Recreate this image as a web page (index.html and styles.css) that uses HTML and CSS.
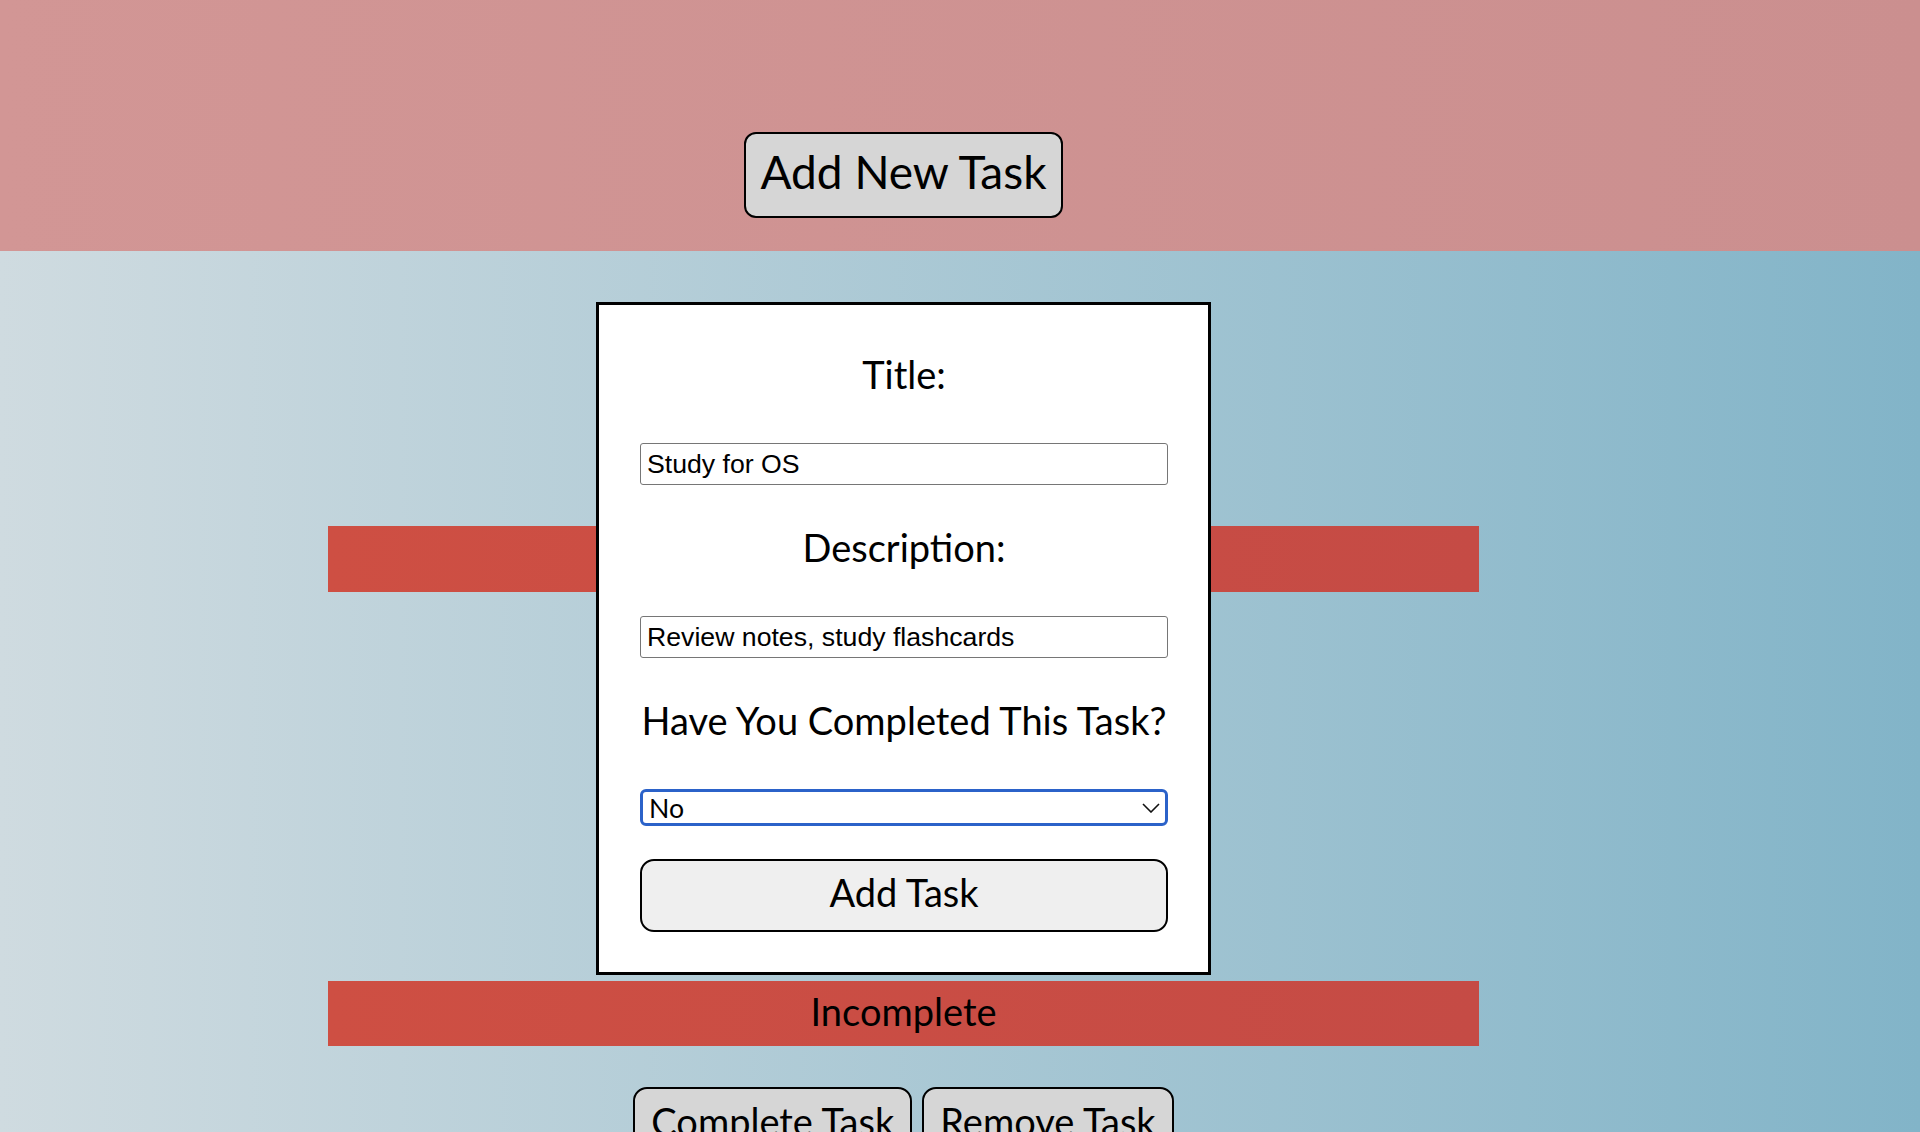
FILE: index.html
```html
<!DOCTYPE html>
<html lang="en">
<head>
  <meta charset="UTF-8">
  <title>Task Manager</title>
  <link rel="stylesheet" href="styles.css">
</head>
<body>

  <header class="top">
    <div class="wrap">
      <button class="new-btn" id="openForm">Add New Task</button>
    </div>
  </header>

  <main class="wrap list">
    <div class="task">
      <h2 class="task-title">Study for OS</h2>
      <p class="task-desc">Review notes, study flashcards</p>
      <div class="task-status">Incomplete</div>
      <div class="task-actions">
        <button class="act-btn">Complete Task</button>
        <button class="act-btn">Remove Task</button>
      </div>
    </div>

    <form class="modal" id="taskForm">
      <label for="title">Title:</label>
      <input type="text" id="title" value="Study for OS" />

      <label for="desc">Description:</label>
      <input type="text" id="desc" value="Review notes, study flashcards" />

      <label for="done">Have You Completed This Task?</label>
      <div class="select-box">
        <select id="done">
          <option value="no">No</option>
          <option value="yes">Yes</option>
        </select>
        <svg class="chevron" width="18" height="10" viewBox="0 0 18 10">
          <polyline points="1,1 9,9 17,1" fill="none" stroke="#111" stroke-width="1.6" />
        </svg>
      </div>

      <button type="submit" class="add-btn">Add Task</button>
    </form>
  </main>

  <script>
    document.getElementById("taskForm").addEventListener("submit", function(e) {
      e.preventDefault();
    });
  </script>

</body>
</html>
```

FILE: styles.css
```css
body {
  margin: 0;
  font-family: Lato, "Noto Sans", sans-serif;
  color: #000;
  min-height: 100vh;
  background: linear-gradient(to right, #cfdbe0, #82b4c8);
}
.wrap {
  width: 1807px;
}
.top {
  height: 251px;
  background: linear-gradient(to right, #d29695, #cb8f8f);
}
.top .wrap {
  display: flex;
  justify-content: center;
  padding-top: 132px;
}
.new-btn {
  height: 86px;
  padding: 0 14px 7px;
  font-family: inherit;
  font-size: 46px;
  background: #d6d6d6;
  border: 2px solid #000;
  border-radius: 12px;
  cursor: pointer;
}
.list {
  position: relative;
  padding-top: 275px;
}
.task {
  width: 1151px;
  margin: 0 auto;
  text-align: center;
}
.task-title, .task-status {
  margin: 0;
  height: 66px;
  line-height: 62px;
  font-size: 38px;
  font-weight: normal;
  background: linear-gradient(to right, #ce4f43, #c54b45);
}
.task-status {
  height: 65px;
  line-height: 60px;
}
.task-desc {
  margin: 0;
  padding: 172px 0 173px;
  font-size: 38px;
  line-height: 44px;
}
.task-actions {
  display: flex;
  justify-content: center;
  gap: 10px;
  margin-top: 41px;
}
.act-btn {
  height: 73px;
  padding: 0 16px 6px;
  font-family: inherit;
  font-size: 38px;
  background: #d6d6d6;
  border: 2px solid #000;
  border-radius: 14px;
  cursor: pointer;
}
.modal {
  position: absolute;
  top: 51px;
  left: 596px;
  width: 528px;
  padding: 47px 40px 40px 41px;
  background: #fff;
  border: 3px solid #000;
}
.modal label {
  display: block;
  text-align: center;
  white-space: nowrap;
  font-size: 38px;
  line-height: 44px;
  margin-bottom: 47px;
}
.modal input {
  display: block;
  box-sizing: border-box;
  width: 100%;
  height: 42px;
  margin: 0 0 40px;
  padding: 0 6px;
  font-family: "Liberation Sans", Arial, sans-serif;
  font-size: 26.67px;
  border: 1px solid #767676;
  border-radius: 3px;
}
.select-box {
  position: relative;
  margin-bottom: 33px;
}
.select-box select {
  display: block;
  box-sizing: border-box;
  width: 100%;
  height: 37px;
  padding: 0 6px;
  font-family: inherit;
  font-size: 26.67px;
  background: #fff;
  border: 3px solid #2b62c9;
  border-radius: 6px;
  appearance: none;
  -webkit-appearance: none;
}
.chevron {
  position: absolute;
  right: 8px;
  top: 14px;
}
.add-btn {
  display: block;
  width: 100%;
  height: 73px;
  padding: 0 0 7px;
  font-family: inherit;
  font-size: 38px;
  background: #efefef;
  border: 2px solid #000;
  border-radius: 14px;
  cursor: pointer;
}
```
